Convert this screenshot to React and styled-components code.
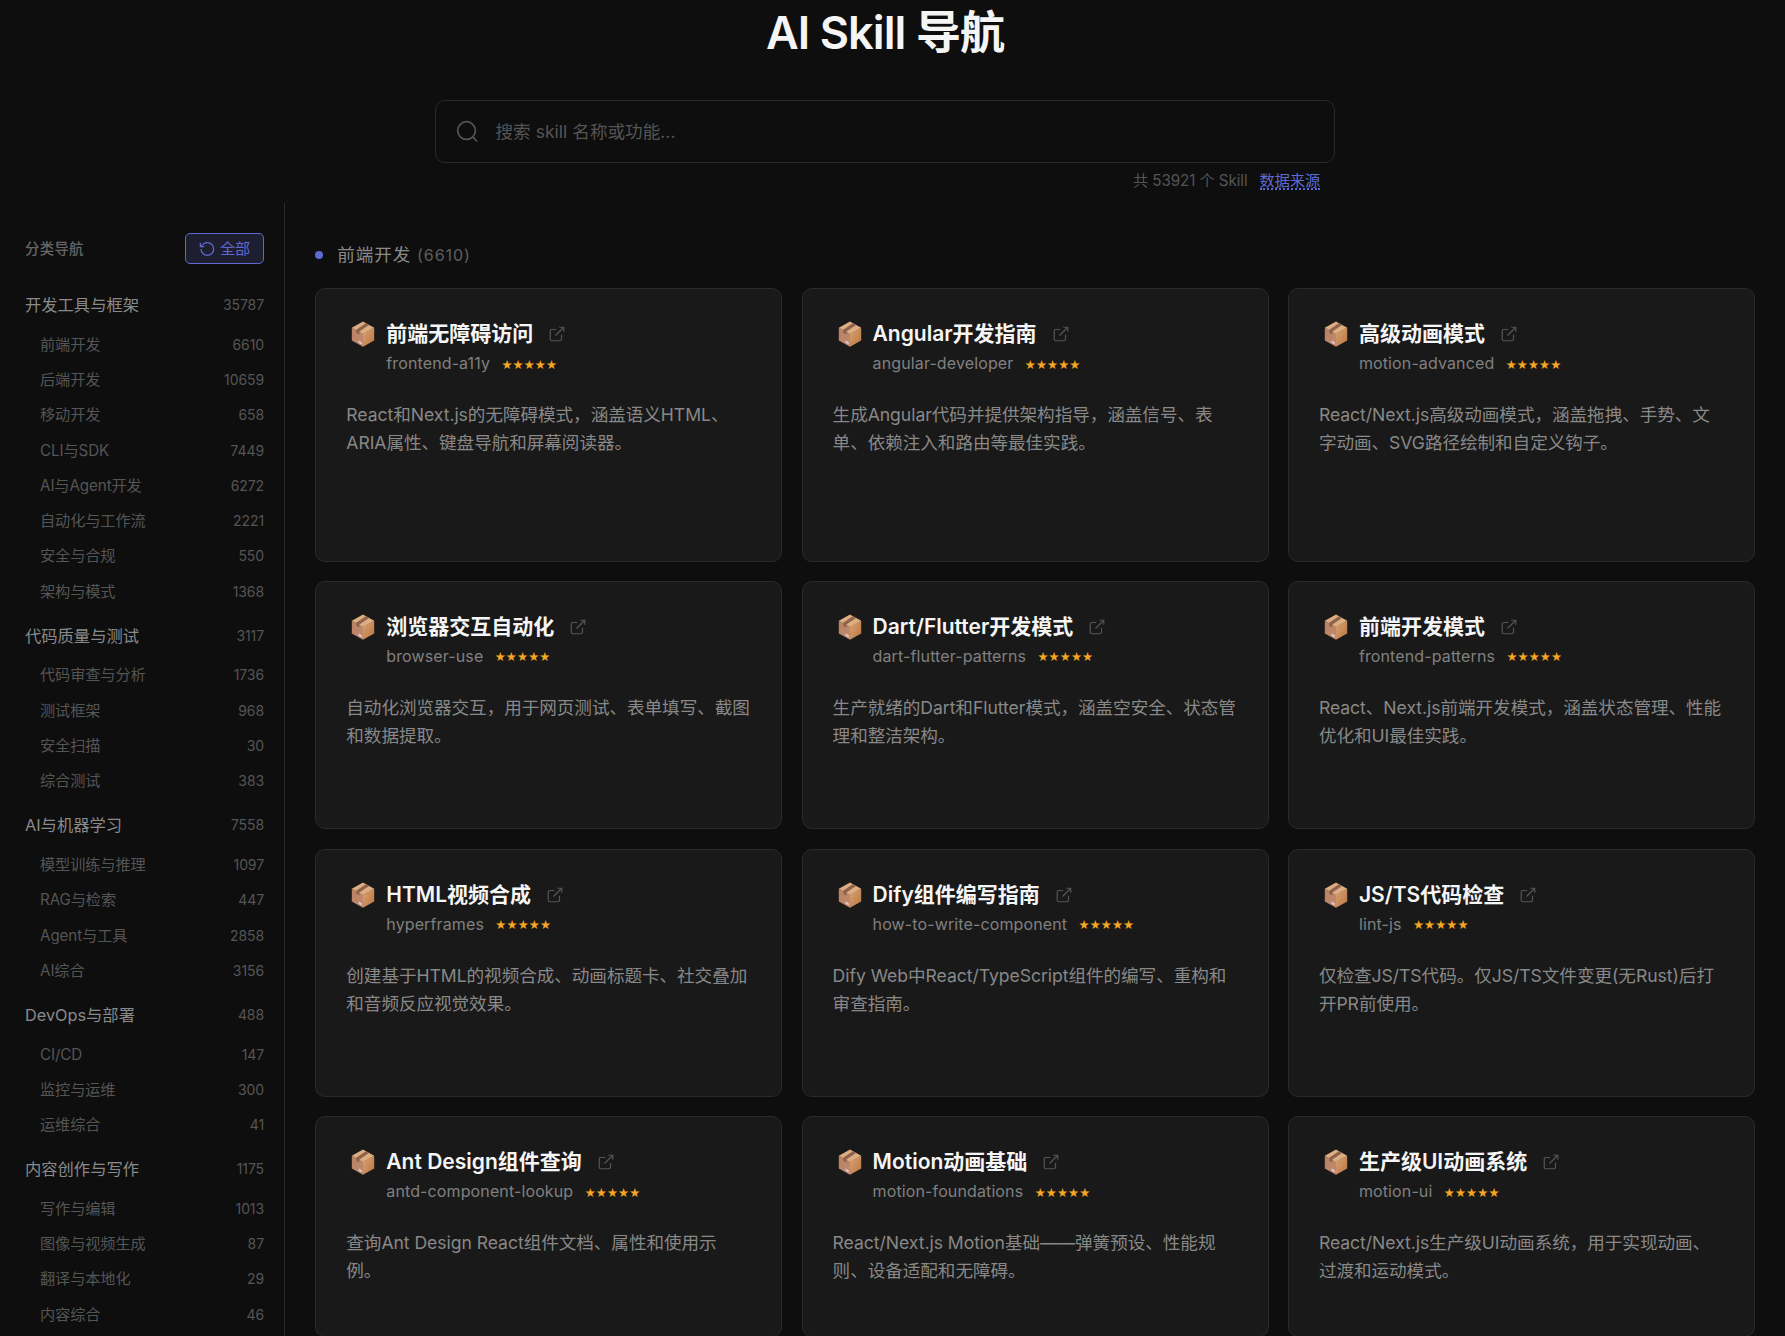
import React from 'react'
import styled, { createGlobalStyle } from 'styled-components'

const GlobalStyle = createGlobalStyle`
  * {
    box-sizing: border-box;
  }

  body {
    margin: 0;
    background: #0e0e0e;
    color: #f5f5f5;
    font-family: Inter, 'Noto Sans CJK SC', sans-serif;
    line-height: 20px;
    overflow: hidden;
  }
`

const Page = styled('div')`
  display: flex;
  flex-direction: column;
  height: 1336px;
  overflow: hidden;
`

const Header = styled('header')`
  flex: 0 0 203px;
  width: 900px;
  margin-left: 435px;
  display: flex;
  flex-direction: column;
`

const Title = styled('h1')`
  margin: 0;
  height: 100px;
  padding-top: 4px;
  font-size: 45px;
  line-height: 58px;
  font-weight: 600;
  letter-spacing: -0.9px;
  text-align: center;
`

const SearchBox = styled('label')`
  flex: 0 0 63px;
  display: flex;
  align-items: center;
  gap: 16.5px;
  padding: 0 20px;
  border: 1px solid #2a2a2a;
  border-radius: 10px;
  color: #555;
`

const SearchInput = styled('input')`
  flex: 1;
  padding: 0;
  border: 0;
  outline: 0;
  background: transparent;
  color: #f5f5f5;
  font-family: inherit;
  font-size: 17.6px;

  &::placeholder {
    color: #555;
    opacity: 1;
  }
`

const Stats = styled('div')`
  display: flex;
  justify-content: flex-end;
  gap: 12px;
  padding: 7px 15px 0 0;
  font-size: 15.2px;
  line-height: 21px;
  letter-spacing: -0.08px;
  color: #555;
`

const SourceLink = styled('a')`
  height: 20px;
  color: #5e6ad2;
  border-bottom: 2px dotted #5e6ad2;
`

const Body = styled('div')`
  flex: 1;
  min-height: 0;
  display: flex;
`

const Sidebar = styled('nav')`
  flex: 0 0 285px;
  padding: 30px 20px 0 25px;
  border-right: 1px solid #2a2a2a;
  overflow: hidden;
`

const SidebarHead = styled('div')`
  display: flex;
  align-items: center;
  justify-content: space-between;
  height: 31px;
  margin-bottom: 19px;
  font-size: 14.4px;
  font-weight: 500;
  letter-spacing: 0.3px;
  color: #666;
`

const AllButton = styled('button')`
  display: flex;
  align-items: center;
  gap: 5px;
  height: 31px;
  padding: 0 13px;
  border: 1px solid #5e6ad2;
  border-radius: 5px;
  background: #1d1e30;
  color: #5e6ad2;
  font-family: inherit;
  font-size: 15.2px;
  line-height: 20px;
  letter-spacing: -0.15px;
`

const Group = styled('section')`
  margin-bottom: 4.4px;
`

const NavRow = styled('div')`
  display: flex;
  align-items: center;
  justify-content: space-between;
  height: ${props => (props.$top ? '44px' : '35.3px')};
  padding-left: ${props => (props.$top ? '0' : '15px')};
  font-size: ${props => (props.$top ? '16.3px' : '15.2px')};
  letter-spacing: ${props => (props.$top ? '0' : '-0.1px')};
  color: ${props => (props.$top ? '#8a8a8a' : '#555')};
`

const NavCount = styled('span')`
  font-size: 14px;
  letter-spacing: -0.1px;
  color: #555;
`

const Main = styled('main')`
  flex: 1;
  padding: 38px 30px 0 30.3px;
  overflow: hidden;
`

const SectionHead = styled('h2')`
  display: flex;
  align-items: center;
  height: 28px;
  margin: 0 0 19px;
  font-size: 17.6px;
  font-weight: 400;
  letter-spacing: 0.9px;
  color: #8a8a8a;

  &::before {
    content: '';
    width: 8px;
    height: 8px;
    margin-right: 14px;
    border-radius: 50%;
    background: #5e6ad2;
  }
`

const SectionCount = styled('span')`
  margin-left: 5.7px;
  font-size: 16px;
  letter-spacing: 0.95px;
  color: #5f5f5f;
`

const Grid = styled('div')`
  display: grid;
  grid-template-columns: repeat(3, 1fr);
  grid-template-rows: 273.75px 248.45px 248.45px 221px;
  gap: 19.2px;
`

const Card = styled('article')`
  padding: 30px;
  border: 1px solid #2a2a2a;
  border-radius: 10px;
  background: #191919;
`

const CardHead = styled('div')`
  display: flex;
  padding-left: 5px;
`

const CardNames = styled('div')`
  padding-left: 11px;
`

const CardTitle = styled('h3')`
  display: flex;
  align-items: center;
  height: 30px;
  margin: 0;
  font-size: 21px;
  line-height: 28px;
  font-weight: 600;
  letter-spacing: 0;
  white-space: nowrap;

  svg {
    margin-left: 15px;
    color: #555;
  }
`

const CardSlug = styled('div')`
  display: flex;
  align-items: center;
  gap: 11.4px;
  height: 28px;
  font-size: 16px;
  letter-spacing: 0.12px;
  color: #808080;
`

const Stars = styled('span')`
  font-family: 'DejaVu Sans', sans-serif;
  font-size: 12.3px;
  line-height: 16px;
  padding-top: 3px;
  color: #f5a623;
`

const Description = styled('p')`
  margin: 24px 0 0;
  font-size: 17.6px;
  line-height: 28.16px;
  letter-spacing: -0.05px;
  color: #888;
`

const NAV = [
  {
    name: '开发工具与框架',
    count: 35787,
    items: [
      ['前端开发', 6610],
      ['后端开发', 10659],
      ['移动开发', 658],
      ['CLI与SDK', 7449],
      ['AI与Agent开发', 6272],
      ['自动化与工作流', 2221],
      ['安全与合规', 550],
      ['架构与模式', 1368],
    ],
  },
  {
    name: '代码质量与测试',
    count: 3117,
    items: [
      ['代码审查与分析', 1736],
      ['测试框架', 968],
      ['安全扫描', 30],
      ['综合测试', 383],
    ],
  },
  {
    name: 'AI与机器学习',
    count: 7558,
    items: [
      ['模型训练与推理', 1097],
      ['RAG与检索', 447],
      ['Agent与工具', 2858],
      ['AI综合', 3156],
    ],
  },
  {
    name: 'DevOps与部署',
    count: 488,
    items: [
      ['CI/CD', 147],
      ['监控与运维', 300],
      ['运维综合', 41],
    ],
  },
  {
    name: '内容创作与写作',
    count: 1175,
    items: [
      ['写作与编辑', 1013],
      ['图像与视频生成', 87],
      ['翻译与本地化', 29],
      ['内容综合', 46],
    ],
  },
]

const SKILLS = [
  {
    title: '前端无障碍访问',
    slug: 'frontend-a11y',
    text: 'React和Next.js的无障碍模式，涵盖语义HTML、ARIA属性、键盘导航和屏幕阅读器。',
  },
  {
    title: 'Angular开发指南',
    slug: 'angular-developer',
    text: '生成Angular代码并提供架构指导，涵盖信号、表单、依赖注入和路由等最佳实践。',
  },
  {
    title: '高级动画模式',
    slug: 'motion-advanced',
    text: 'React/Next.js高级动画模式，涵盖拖拽、手势、文字动画、SVG路径绘制和自定义钩子。',
  },
  {
    title: '浏览器交互自动化',
    slug: 'browser-use',
    text: '自动化浏览器交互，用于网页测试、表单填写、截图和数据提取。',
  },
  {
    title: 'Dart/Flutter开发模式',
    slug: 'dart-flutter-patterns',
    text: '生产就绪的Dart和Flutter模式，涵盖空安全、状态管理和整洁架构。',
  },
  {
    title: '前端开发模式',
    slug: 'frontend-patterns',
    text: 'React、Next.js前端开发模式，涵盖状态管理、性能优化和UI最佳实践。',
  },
  {
    title: 'HTML视频合成',
    slug: 'hyperframes',
    text: '创建基于HTML的视频合成、动画标题卡、社交叠加和音频反应视觉效果。',
  },
  {
    title: 'Dify组件编写指南',
    slug: 'how-to-write-component',
    text: 'Dify Web中React/TypeScript组件的编写、重构和审查指南。',
  },
  {
    title: 'JS/TS代码检查',
    slug: 'lint-js',
    text: '仅检查JS/TS代码。仅JS/TS文件变更(无Rust)后打开PR前使用。',
  },
  {
    title: 'Ant Design组件查询',
    slug: 'antd-component-lookup',
    text: '查询Ant Design React组件文档、属性和使用示例。',
  },
  {
    title: 'Motion动画基础',
    slug: 'motion-foundations',
    text: 'React/Next.js Motion基础——弹簧预设、性能规则、设备适配和无障碍。',
  },
  {
    title: '生产级UI动画系统',
    slug: 'motion-ui',
    text: 'React/Next.js生产级UI动画系统，用于实现动画、过渡和运动模式。',
  },
]

function SearchIcon() {
  return (
    <svg width="23" height="23" viewBox="0 0 24 24" fill="none" stroke="currentColor" strokeWidth="1.8">
      <circle cx="11" cy="11" r="9.2" />
      <path d="M17.8 17.8 L22 22.4" />
    </svg>
  )
}

function ResetIcon() {
  return (
    <svg width="16" height="16" viewBox="0 0 24 24" fill="none" stroke="currentColor" strokeWidth="1.8">
      <path d="M3 12a9.5 9.5 0 1 0 9.5-9.5 10 10 0 0 0-7 3L2 8.5" />
      <path d="M2 2.5v6h6" />
    </svg>
  )
}

function LinkIcon() {
  return (
    <svg width="18" height="18" viewBox="0 0 24 24" fill="none" stroke="currentColor" strokeWidth="1.6">
      <path d="M18 13v6a2 2 0 0 1-2 2H5a2 2 0 0 1-2-2V8a2 2 0 0 1 2-2h6" />
      <path d="M15 3h6v6" />
      <path d="M10 14 21 3" />
    </svg>
  )
}

function BoxIcon() {
  return (
    <svg width="24" height="30" viewBox="0 0 24 30">
      <defs>
        <linearGradient id="boxLeft" x1="0" y1="0" x2="1" y2="1">
          <stop offset="0" stopColor="#b98262" />
          <stop offset="1" stopColor="#c08a70" />
        </linearGradient>
        <linearGradient id="boxRight" x1="0" y1="0" x2="1" y2="1">
          <stop offset="0" stopColor="#dba272" />
          <stop offset="1" stopColor="#b87642" />
        </linearGradient>
      </defs>
      <path d="M0.8 8.8 12 14.8V27.8L0.8 21.6Z" fill="url(#boxLeft)" />
      <path d="M23.2 8.8 12 14.8V27.8L23.2 21.6Z" fill="url(#boxRight)" />
      <path d="M12 2.6 23.2 8.8 12 15.1 0.8 8.8Z" fill="#ddae82" />
      <path d="M14.8 4.2 18 6 8.4 12.4V15.6L5.2 13.8V10.8Z" fill="#8f624e" />
      <path d="M7.6 21.4 10.8 23.2V25.6L7.6 23.8Z" fill="#e3c8d0" />
    </svg>
  )
}

function SkillCard({ skill }) {
  return (
    <Card>
      <CardHead>
        <BoxIcon />
        <CardNames>
          <CardTitle>
            {skill.title}
            <LinkIcon />
          </CardTitle>
          <CardSlug>
            {skill.slug}
            <Stars>★★★★★</Stars>
          </CardSlug>
        </CardNames>
      </CardHead>
      <Description>{skill.text}</Description>
    </Card>
  )
}

export default function App() {
  return (
    <Page>
      <GlobalStyle />
      <Header>
        <Title>AI Skill 导航</Title>
        <SearchBox>
          <SearchIcon />
          <SearchInput placeholder="搜索 skill 名称或功能..." />
        </SearchBox>
        <Stats>
          <span>共 53921 个 Skill</span>
          <SourceLink>数据来源</SourceLink>
        </Stats>
      </Header>
      <Body>
        <Sidebar>
          <SidebarHead>
            分类导航
            <AllButton>
              <ResetIcon />
              全部
            </AllButton>
          </SidebarHead>
          {NAV.map(group => (
            <Group key={group.name}>
              <NavRow $top>
                {group.name}
                <NavCount>{group.count}</NavCount>
              </NavRow>
              {group.items.map(([name, count]) => (
                <NavRow key={name}>
                  {name}
                  <NavCount>{count}</NavCount>
                </NavRow>
              ))}
            </Group>
          ))}
        </Sidebar>
        <Main>
          <SectionHead>
            前端开发
            <SectionCount>(6610)</SectionCount>
          </SectionHead>
          <Grid>
            {SKILLS.map(skill => (
              <SkillCard key={skill.slug} skill={skill} />
            ))}
          </Grid>
        </Main>
      </Body>
    </Page>
  )
}
